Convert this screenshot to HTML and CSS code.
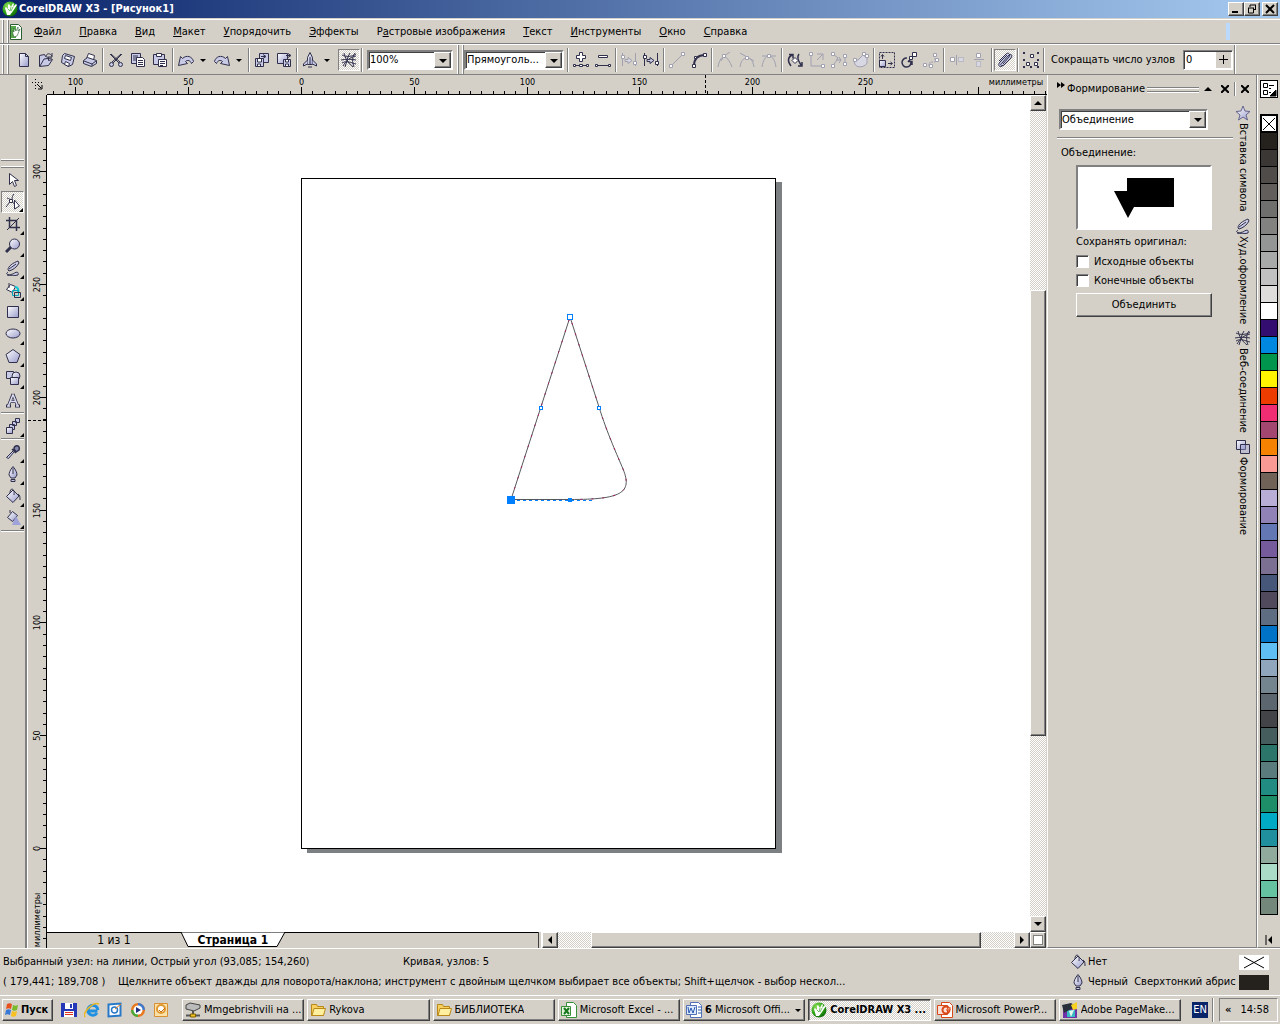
FILE: index.html
```html
<!DOCTYPE html>
<html lang="ru">
<head>
  <meta charset="UTF-8" />
  <meta name="viewport" content="width=device-width, initial-scale=1.0"/>
  <title>CorelDRAW X3 - [Рисунок1]</title>
  <link rel="stylesheet" href="styles.css">
</head>
<body>
  <!-- icon sprite -->
  <svg class="sprite" aria-hidden="true">
    <defs>
      <linearGradient id="shade" x1="0" y1="0" x2="1" y2="1">
        <stop offset="0" stop-color="#ffffff"/>
        <stop offset="1" stop-color="#9a9ccb"/>
      </linearGradient>
      <radialGradient id="ball" cx="0.35" cy="0.3" r="0.8">
        <stop offset="0" stop-color="#8fe05a"/>
        <stop offset="0.6" stop-color="#28a012"/>
        <stop offset="1" stop-color="#0b5a08"/>
      </radialGradient>
    </defs>
    <symbol id="i-corel" viewBox="0 0 16 16"><circle cx="8" cy="8" r="7.500" fill="url(#ball)" stroke="none"/><path d="M5 14L3 7l1-1 2 2V4l1-1 2 3 2-4 1 1-1 3 3-3 1 1-4 6-3 4z" fill="#fff" stroke="none"/><path d="M6 8l2 2M9 6l-1 4M11 6l-2 4" stroke="#3aa82a" fill="none" stroke-width=".7"/></symbol>
    <symbol id="i-doc" viewBox="0 0 16 16"><path d="M2.500.5h8l3 3v12h-11z" fill="#fff" stroke="#2a6030"/><path d="M3 2h5v12H3z" fill="#54a848" stroke="none"/><path d="M6 13L4 7l2 1V4l2 3 2-4v4l2-2-3 7z" fill="#fff" stroke="#2a6030" stroke-width=".6"/></symbol>
    <symbol id="i-new" viewBox="0 0 16 16"><path d="M3.500 1.500h6l3 3v10h-9z" fill="url(#shade)"/><path d="M9.500 1.500v3h3" fill="none"/></symbol>
    <symbol id="i-open" viewBox="0 0 16 16"><path d="M1.500 14.500v-11l5-1 1 2 3 1v3l4-1-4 6z"/><path d="M2 14l4-7 8-1" fill="none"/><path d="M8 4c1-3 4-3 6 0M14 1v4h-4" fill="none"/></symbol>
    <symbol id="i-save" viewBox="0 0 16 16"><path d="M4.500 1.500l10 3-2 8-4 2-7-4 1-7z"/><path d="M5.500 3.500l6 2-1 3-6-2zM5.500 9.500l4 2-1 3-4-2z" fill="#fff"/></symbol>
    <symbol id="i-print" viewBox="0 0 16 16"><path d="M4.500 6.500l2-5 6 2-1 5z" fill="#fff"/><path d="M1.500 8.500l4-3 9 3v3l-5 3-8-3z"/><path d="M2 9l8 3 4-3M10 12v2" fill="none"/></symbol>
    <symbol id="i-cut" viewBox="0 0 16 16"><path d="M2 2l9 9M14 2L5 11M3 2l9 8M13 2L4 10" fill="none"/><circle cx="3.500" cy="12.500" r="2"/><circle cx="12.500" cy="12.500" r="2"/></symbol>
    <symbol id="i-copy" viewBox="0 0 16 16"><path d="M1.500 1.500h9v10h-9z"/><path d="M3 4h5M3 6h5M3 8h3" /><path d="M6.500 5.500h6l2 2v7h-8z" fill="#fff"/><path d="M8 8.500h5M8 10.500h5M8 12.500h5"/></symbol>
    <symbol id="i-paste" viewBox="0 0 16 16"><path d="M1.500 2.500h11v10h-11z"/><path d="M4.500 1.500h5v3h-5z" fill="#fff"/><path d="M6.500 7.500h8v7h-8z" fill="#fff"/><path d="M8 9.500h5M8 11.500h5M8 13.500h3"/></symbol>
    <symbol id="i-undo" viewBox="0 0 16 16"><path d="M.5 13.500l2-9 2 2c4-4 10-2 11 3l-2 2c-1-3-4-4-6-2l2 2z"/></symbol>
    <symbol id="i-redo" viewBox="0 0 16 16"><path d="M15.500 13.500l-2-9-2 2c-4-4-10-2-11 3l2 2c1-3 4-4 6-2l-2 2z"/></symbol>
    <symbol id="i-import" viewBox="0 0 16 16"><path d="M5.500 1.500h9v9h-9z"/><path d="M7 4.500h4M9 2.500l3 2-3 2" fill="none"/><path d="M1.500 6.500h8v8h-8z"/><path d="M3.500 7v3h4V7M3.500 14v-2h3v2" fill="#fff"/></symbol>
    <symbol id="i-export" viewBox="0 0 16 16"><path d="M1.500 1.500h10v10h-10z" fill="url(#shade)"/><path d="M10 3.500h4M12 1.500l3 2-3 2" fill="none"/><path d="M7.500 7.500h7v7h-7z"/><path d="M9.500 8v2h3V8M9.500 14v-2h3v2" fill="#fff"/></symbol>
    <symbol id="i-launch" viewBox="0 0 16 16"><path d="M5.500 12.500v-7l2.500-5 2.500 5v7z" fill="url(#shade)"/><path d="M5.500 8l-4 4v2l4-2M10.500 8l4 4v2l-4-2M6 15h4M8 5v8"/></symbol>
    <symbol id="i-web" viewBox="0 0 16 16"><path d="M1 3c4 2 10 2 14-1M0 8c5-1 10-1 15 0M2 14C5 9 9 5 15 4M3 1c1 5 4 10 9 14M9 1c-3 4-3 9-5 14M14 1c-3 4-3 9-1 14M1 11c5-3 9 0 14 1" fill="none"/></symbol>
    <symbol id="i-addnode" viewBox="0 0 16 16"><path d="M6.500 3.500v-3h3v3h3v3h-3v3h-3v-3h-3v-3z" fill="#fff"/><path d="M3 13.500h10" /><path d="M.5 12.500h2v2h-2zM6.500 12.500h3v2h-3zM13.500 12.500h2v2h-2z" fill="#fff"/></symbol>
    <symbol id="i-delnode" viewBox="0 0 16 16"><path d="M3.500 3.500h9v2h-9z" fill="#fff"/><path d="M3 13.500h10"/><path d="M.5 12.500h2v2h-2zM13.500 12.500h2v2h-2z" fill="#fff"/></symbol>
    <symbol id="i-join" viewBox="0 0 16 16"><path d="M1.500 1v13M14.500 1v13M4 7.500h3v-2l4 3-4 3v-2H4z"/><path d="M.5 3.500h3v3h-3zM12.500 9.500h3v3h-3z" fill="#fff"/></symbol>
    <symbol id="i-line" viewBox="0 0 16 16"><path d="M2 14L14 2"/><path d="M.5 12.500h3v3h-3zM12.500.5h3v3h-3z" fill="#fff"/></symbol>
    <symbol id="i-curve" viewBox="0 0 16 16"><path d="M3 14C3 7 6 3 14 3" fill="none" stroke-width="2"/><path d="M1.500 12.500h3v3h-3zM12.500 1.500h3v3h-3zM3.500 4.500h2v2h-2z" fill="#fff"/></symbol>
    <symbol id="i-cusp" viewBox="0 0 16 16"><path d="M1 15C2 9 4 6 7 4c4 2 6 6 8 11M7 4l6-4M7 4L4 9" fill="none"/><path d="M5.500 2.500h3v3h-3z" fill="#fff"/></symbol>
    <symbol id="i-smooth" viewBox="0 0 16 16"><path d="M1 15C2 9 4 6 8 6c4 0 6 3 7 9M1 1l14 8" fill="none"/><path d="M6.500 4.500h3v3h-3z" fill="#fff"/></symbol>
    <symbol id="i-symm" viewBox="0 0 16 16"><path d="M1 15C2 9 4 4 8 4c4 0 6 5 7 11M1 4h14" fill="none"/><path d="M6.500 2.500h3v3h-3z" fill="#fff"/></symbol>
    <symbol id="i-reverse" viewBox="0 0 16 16"><path d="M4 14C0 9 1 5 5 3M2 2.500h4v4M12 2c-3 4 0 8 2 11M15 10v4h-4" fill="none" stroke-width="1.500"/><path d="M8 5.500l3 3-3 3-3-3z" fill="#fff"/></symbol>
    <symbol id="i-close" viewBox="0 0 16 16"><path d="M2 2v12h12M8 2h6v6M14 2L8 8" fill="none"/><path d="M.5.5h3v3h-3zM12.500 12.500h3v3h-3z" fill="#fff"/></symbol>
    <symbol id="i-extract" viewBox="0 0 16 16"><path d="M2 2l5 4-5 8M14 3v10M5 8h5l-2-3M10 8l-2 3" fill="none"/><path d="M.5.5h3v3h-3zM.5 12.500h3v3h-3zM12.500 2.500h3v3h-3zM12.500 10.500h3v3h-3z" fill="#fff"/></symbol>
    <symbol id="i-auto" viewBox="0 0 16 16"><path d="M2 8c-3 8 9 9 12 3V6l-4-3-5 5z"/><path d="M.5 6.500h3v3h-3zM9.500.5h3v3h-3zM12.500 2.500h3v3h-3z" fill="#fff"/></symbol>
    <symbol id="i-stretch" viewBox="0 0 16 16"><path d="M.5.5h15v15H.5z" fill="none" stroke-dasharray="2 1"/><path d="M.5 8.500h6v6h-6z" fill="url(#shade)"/><path d="M3.500 7V3M2 4.500l1.500-2 1.500 2M9 11.500h4M11.500 10l2 1.500-2 1.500" fill="none"/></symbol>
    <symbol id="i-rotate" viewBox="0 0 16 16"><path d="M6 6a4.500 4.500 0 1 0 4 4M12 4l-5 6M7 9.500h4V13" fill="none" stroke-width="1.500"/><path d="M11.500.5h4v4h-4zM8.500 4.500h3v3h-3z" fill="#fff"/></symbol>
    <symbol id="i-align" viewBox="0 0 16 16"><path d="M2 13h5v-3h5V4" fill="none" stroke-dasharray="2 1"/><path d="M.5 11.500h3v3h-3zM6.500 12.500h3v3h-3zM10.500 1.500h3v3h-3zM12.500 6.500h3v3h-3z" fill="#fff"/></symbol>
    <symbol id="i-href" viewBox="0 0 16 16"><path d="M1.500 5.500h4v4h-4z" fill="#fff"/><path d="M7.500 3v10"/><path d="M9.500 5.500h5v4h-5z" stroke-dasharray="1 1"/></symbol>
    <symbol id="i-vref" viewBox="0 0 16 16"><path d="M5.500 1.500h4v4h-4z" fill="#fff"/><path d="M3 7.500h10"/><path d="M5.500 9.500h4v5h-4z" stroke-dasharray="1 1"/></symbol>
    <symbol id="i-elastic" viewBox="0 0 16 16"><path d="M2 9l7-7c2-2 5 0 3 3l-6 7M6 13c-3 4-6 0-3-3l7-7M5 11l6-7c3-3 5-1 3 2l-7 7c-2 2-5 0-2-2z"/></symbol>
    <symbol id="i-selall" viewBox="0 0 16 16"><path d="M0 1h2M14 1h2M0 15h2M7 15h2M14 15h2M0 8h2M14 8h2" stroke-width="2"/><path d="M7.500 2.500h3v3h-3zM3.500 10.500h3v3h-3zM11.500 10.500h3v3h-3z" fill="#fff"/></symbol>
    <symbol id="i-pick" viewBox="0 0 16 16"><path d="M4.500 1.500v11l3-3 2 5 2-1-2-5h4z" fill="#fff"/></symbol>
    <symbol id="i-shape" viewBox="0 0 16 16"><path d="M9 0C6 3 8 6 6 7S3 11 1 13M2 4c4 1 6 4 9 9" fill="none"/><path d="M4.500 5.500h3v3h-3z" fill="#fff"/><path d="M9.500 6v9l5-3z" fill="#fff"/></symbol>
    <symbol id="i-crop" viewBox="0 0 16 16"><path d="M4.500 1v10.500H15M1 4.500h10.500V15" fill="none" stroke-width="1.500"/><path d="M2 14L14 2"/></symbol>
    <symbol id="i-zoom" viewBox="0 0 16 16"><path d="M1 14l5-5" stroke-width="3"/><circle cx="9.500" cy="6" r="5" fill="url(#shade)"/></symbol>
    <symbol id="i-pen" viewBox="0 0 16 16"><path d="M3 10C3 6 8 3 13 1l1 2c-2 4-6 7-10 8z" fill="url(#shade)"/><path d="M4 9l7-5"/><path d="M3 12c-4 3 2 3 5 2 4-3 6-2 5 1-4 1-8 1-11 0" /></symbol>
    <symbol id="i-smart" viewBox="0 0 16 16"><path d="M1.500 7.500l4-5 5 2-3 6z" fill="#fff"/><path d="M4 1v5" /><path d="M10 5c3 0 4 3 3 6" stroke="#00c8d8" stroke-width="2" fill="none"/><path d="M7.500 8.500h6v5h-6z" stroke="#00a8b8" fill="none"/><path d="M9.500 10.500h6v5h-6z" fill="none"/></symbol>
    <symbol id="i-rect" viewBox="0 0 16 16"><path d="M2.500 2.500h11v11h-11z" fill="url(#shade)"/></symbol>
    <symbol id="i-ellipse" viewBox="0 0 16 16"><ellipse cx="8" cy="7.500" rx="7" ry="4.500" fill="url(#shade)"/></symbol>
    <symbol id="i-poly" viewBox="0 0 16 16"><path d="M8 1.500l7 5-3 8H4l-3-8z" fill="url(#shade)"/></symbol>
    <symbol id="i-shapes" viewBox="0 0 16 16"><path d="M1.500 1.500h7v7h-7z"/><circle cx="11" cy="6" r="4" fill="url(#shade)"/><path d="M5.500 7.500h8v7h-8z" fill="url(#shade)"/></symbol>
    <symbol id="i-text" viewBox="0 0 16 16"><path d="M8 2l4.500 11.500M8 2L3.500 13.500M5 9.500h6M1 14h5M10 14h5" fill="none" stroke-width="3"/><path d="M8 2.500l4.500 11M8 2.500l-4.500 11M5 9.500h6M2 14h3M11 14h3" fill="none" stroke="#dcdcf0" stroke-width="1.500"/></symbol>
    <symbol id="i-blend" viewBox="0 0 16 16"><path d="M10.500.5h4v4h-4zM7.500 3.500h4v4h-4zM4.500 6.500h5v5h-5z"/><path d="M1.500 9.500h6v6h-6z" fill="url(#shade)"/></symbol>
    <symbol id="i-dropper" viewBox="0 0 16 16"><path d="M1.500 13.500l7-7 1 1-6 7z"/><path d="M7 5l4 4M9 5c0-5 7-4 5 1l-3 2z" fill="#8688ae" stroke-width="1.500"/></symbol>
    <symbol id="i-nib" viewBox="0 0 16 16"><path d="M8 .5C5 4 4 7 4 9l2 3h4l2-3c0-2-1-5-4-8.500z" fill="url(#shade)"/><path d="M8 2v6"/><path d="M6 13.500h4v2H6z"/></symbol>
    <symbol id="i-bucket" viewBox="0 0 16 16"><path d="M1.500 8.500L8 2l6 6-6 6.500z" fill="url(#shade)"/><path d="M5 5c0-6 5-5 4 2M13 6c2 1 2 3 2 6" fill="none"/></symbol>
    <symbol id="i-ifill" viewBox="0 0 16 16"><path d="M2.500 7.500l5-6 5 4-5 6z" fill="url(#shade)"/><path d="M5 3V0" /><path d="M11 6l5 9H7z" fill="#9fa2d8" stroke="none"/></symbol>
    <symbol id="i-star" viewBox="0 0 16 16"><path d="M8 1l2 5 5 .5-4 3.500 1.500 5L8 12l-4.500 3L5 10 1 6.500 6 6z" fill="url(#shade)" stroke="#64648c"/></symbol>
    <symbol id="i-squares" viewBox="0 0 16 16"><path d="M1.500 1.500h9v9h-9z" fill="url(#shade)"/><path d="M5.500 5.500h9v9h-9z" fill="#9fa2d866"/></symbol>
    <symbol id="i-flag" viewBox="0 0 16 16"><g stroke="none"><path d="M3 2c2-1 3-1 5 0L7 7C5 6 4 6 2 7z" fill="#e8501c"/><path d="M9 3c2 1 3 1 5 0l-1 5c-2 1-4 1-5 0z" fill="#7ab928"/><path d="M2 8c2-1 3-1 5 0l-1 5C4 12 3 12 1 13z" fill="#3a78d8"/><path d="M8 9c2 1 3 1 5 0l-1 5c-2 1-4 1-5 0z" fill="#f8c020"/></g></symbol>
    <symbol id="i-floppy" viewBox="0 0 16 16"><g stroke="none"><path d="M0 1h16v14H0z" fill="#2438b8"/><path d="M4 1h8v6H4zM3 9h10v6H3z" fill="#fff"/><path d="M9 2h2v4H9z" fill="#2438b8"/><path d="M4 10h8v1H4zM4 12h8v1H4z" fill="#e03020"/></g></symbol>
    <symbol id="i-ie" viewBox="0 0 16 16"><path d="M13.500 9H5M13 11a5 5 0 1 1 .8-3" fill="none" stroke="#2090e0" stroke-width="3"/><path d="M1 15C-2 11 9-1 15 2" fill="none" stroke="#f0b820" stroke-width="1.500"/></symbol>
    <symbol id="i-outx" viewBox="0 0 16 16"><path d="M1.500 2.500l12-1v12l-12 1z" fill="#fff" stroke="#2878c8" stroke-width="2"/><circle cx="7.500" cy="8" r="3" fill="none" stroke="#2878c8" stroke-width="1.500"/><path d="M8 7l6-5" stroke="#e08020"/></symbol>
    <symbol id="i-wmp" viewBox="0 0 16 16"><circle cx="8" cy="8" r="7" fill="#e87820" stroke="none"/><path d="M8 1a7 7 0 0 1 7 7H8z" fill="#3c78d0" stroke="none"/><path d="M8 15a7 7 0 0 1-7-7h7z" fill="#48a838" stroke="none"/><circle cx="8" cy="8" r="4.500" fill="#fff" stroke="none"/><path d="M6 5l5 3-5 3z" fill="#203080" stroke="none"/></symbol>
    <symbol id="i-outlook" viewBox="0 0 16 16"><path d="M1.500 1.500h13v13h-13z" fill="#fbe0a8" stroke="#d89030"/><circle cx="8" cy="7" r="4" fill="#fff" stroke="#e09830" stroke-width="2"/><path d="M6 8l2 2 4-4" fill="none" stroke="#c07010"/></symbol>
    <symbol id="i-netdrive" viewBox="0 0 16 16"><path d="M1 3l4-2 10 2v3l-6 3-8-2z" fill="#bbb" stroke="#444"/><path d="M8 9v4M1 13.500h14" stroke="#555" stroke-width="2"/><path d="M5.500 12h5v3h-5z" fill="#f0c020" stroke="#806000"/></symbol>
    <symbol id="i-folder" viewBox="0 0 16 16"><path d="M1.500 13.500v-11h5l1 2h6v9z" fill="#f8d060" stroke="#b88818"/><path d="M2 13.500l2-7h11.500l-2 7z" fill="#fff0a0" stroke="#b88818"/></symbol>
    <symbol id="i-excel" viewBox="0 0 16 16"><path d="M5.500.5h7l3 3v12h-10z" fill="#fff" stroke="#389038"/><path d="M.5 4.500h9v9h-9z" fill="#e4f4e0" stroke="#389038"/><path d="M3 6l5 6M8 6l-5 6" stroke="#18781c" stroke-width="2"/></symbol>
    <symbol id="i-word" viewBox="0 0 16 16"><path d="M4.500.5h8l3 3v12h-11z" fill="#fff" stroke="#5070b8"/><path d="M.5 3.500h10v9H.5z" fill="#dce8fc" stroke="#5070b8"/><path d="M2 5l1 6 2-5 2 5 2-6M12 5h3M12 8h3M12 11h3" fill="none" stroke="#2858b0"/></symbol>
    <symbol id="i-ppt" viewBox="0 0 16 16"><path d="M4.500.5h8l3 3v12h-11z" fill="#fff" stroke="#d84818"/><path d="M.5 3.500h10v9H.5z" fill="#fbe0d8" stroke="#d84818"/><circle cx="9" cy="8" r="3.500" fill="none" stroke="#d84818" stroke-width="2"/><path d="M9 8h4V5" fill="#f8b090" stroke="#d84818"/></symbol>
    <symbol id="i-pm" viewBox="0 0 16 16"><g stroke="none"><path d="M1 4h14v12H1z" fill="#7030a8"/><path d="M5 8h8v7H5z" fill="#38b8c0"/><path d="M0 3l9-2 6 4-6 2-7 4z" fill="#28303c"/><path d="M9 3l6-3v7l-4 1z" fill="#f8d020"/><path d="M7 9l5-1-3 7z" fill="#e8f8f0"/></g></symbol>
  </svg>

  <header class="titlebar">
    <svg class="icon"><use href="#i-corel"/></svg>
    <h1>CorelDRAW X3 - [Рисунок1]</h1>
    <div class="window-btns">
      <button aria-label="Свернуть"><svg viewBox="0 0 10 10"><path d="M1 8h6" stroke-width="2"/></svg></button>
      <button aria-label="Восстановить"><svg viewBox="0 0 10 10"><path d="M3 1h6M3 1v2M8.500 1v5M7 5.500h2M1 4h6M1.500 4v5h5V4"/></svg></button>
      <button class="close" aria-label="Закрыть"><svg viewBox="0 0 10 10"><path d="M1 1l8 8M9 1L1 9" stroke-width="2"/></svg></button>
    </div>
  </header>

  <nav class="menubar">
    <span class="grip"></span>
    <svg class="icon"><use href="#i-doc"/></svg>
    <button><u>Ф</u>айл</button>
    <button><u>П</u>равка</button>
    <button><u>В</u>ид</button>
    <button><u>М</u>акет</button>
    <button><u>У</u>порядочить</button>
    <button><u>Э</u>ффекты</button>
    <button>Р<u>а</u>стровые изображения</button>
    <button><u>Т</u>екст</button>
    <button><u>И</u>нструменты</button>
    <button><u>О</u>кно</button>
    <button><u>С</u>правка</button>
    <span class="marker"></span>
  </nav>

  <div class="toolbars">
    <span class="grip"></span>
    <button class="tool" aria-label="Создать"><svg class="icon"><use href="#i-new"/></svg></button>
    <button class="tool" aria-label="Открыть"><svg class="icon"><use href="#i-open"/></svg></button>
    <button class="tool" aria-label="Сохранить"><svg class="icon"><use href="#i-save"/></svg></button>
    <button class="tool" aria-label="Печать"><svg class="icon"><use href="#i-print"/></svg></button>
    <span class="sep"></span>
    <button class="tool" aria-label="Вырезать"><svg class="icon"><use href="#i-cut"/></svg></button>
    <button class="tool" aria-label="Копировать"><svg class="icon"><use href="#i-copy"/></svg></button>
    <button class="tool" aria-label="Вставить"><svg class="icon"><use href="#i-paste"/></svg></button>
    <span class="sep"></span>
    <button class="tool drop" aria-label="Отменить"><svg class="icon"><use href="#i-undo"/></svg></button>
    <button class="tool drop" aria-label="Вернуть"><svg class="icon"><use href="#i-redo"/></svg></button>
    <span class="sep"></span>
    <button class="tool" aria-label="Импорт"><svg class="icon"><use href="#i-import"/></svg></button>
    <button class="tool" aria-label="Экспорт"><svg class="icon"><use href="#i-export"/></svg></button>
    <span class="sep"></span>
    <button class="tool drop" aria-label="Запуск приложений"><svg class="icon"><use href="#i-launch"/></svg></button>
    <button class="tool pressed" aria-label="Веб-соединение"><svg class="icon"><use href="#i-web"/></svg></button>
    <span class="sep"></span>
    <div class="combo zoom"><select aria-label="Масштаб"><option>100%</option></select></div>

    <span class="grip"></span>
    <div class="combo mode"><select aria-label="Режим выделения"><option>Прямоуголь...</option></select></div>
    <span class="sep"></span>
    <button class="tool" aria-label="Добавить узлы"><svg class="icon"><use href="#i-addnode"/></svg></button>
    <button class="tool" aria-label="Удалить узлы"><svg class="icon"><use href="#i-delnode"/></svg></button>
    <span class="sep"></span>
    <button class="tool" disabled aria-label="Соединить узлы"><svg class="icon"><use href="#i-join"/></svg></button>
    <button class="tool" aria-label="Разъединить"><svg class="icon"><use href="#i-join"/></svg></button>
    <span class="sep"></span>
    <button class="tool" disabled aria-label="В линию"><svg class="icon"><use href="#i-line"/></svg></button>
    <button class="tool" aria-label="В кривую"><svg class="icon"><use href="#i-curve"/></svg></button>
    <span class="sep"></span>
    <button class="tool" disabled aria-label="Острый"><svg class="icon"><use href="#i-cusp"/></svg></button>
    <button class="tool" disabled aria-label="Сглаженный"><svg class="icon"><use href="#i-smooth"/></svg></button>
    <button class="tool" disabled aria-label="Симметричный"><svg class="icon"><use href="#i-symm"/></svg></button>
    <span class="sep"></span>
    <button class="tool" aria-label="Обратить"><svg class="icon"><use href="#i-reverse"/></svg></button>
    <button class="tool" disabled aria-label="Замкнуть"><svg class="icon"><use href="#i-close"/></svg></button>
    <button class="tool" disabled aria-label="Извлечь"><svg class="icon"><use href="#i-extract"/></svg></button>
    <button class="tool" disabled aria-label="Автозамыкание"><svg class="icon"><use href="#i-auto"/></svg></button>
    <span class="sep"></span>
    <button class="tool" aria-label="Растянуть"><svg class="icon"><use href="#i-stretch"/></svg></button>
    <button class="tool" aria-label="Повернуть"><svg class="icon"><use href="#i-rotate"/></svg></button>
    <button class="tool" disabled aria-label="Выровнять"><svg class="icon"><use href="#i-align"/></svg></button>
    <span class="sep"></span>
    <button class="tool" disabled aria-label="Отразить по горизонтали"><svg class="icon"><use href="#i-href"/></svg></button>
    <button class="tool" disabled aria-label="Отразить по вертикали"><svg class="icon"><use href="#i-vref"/></svg></button>
    <span class="sep"></span>
    <button class="tool pressed" aria-label="Эластичный режим"><svg class="icon"><use href="#i-elastic"/></svg></button>
    <span class="sep"></span>
    <button class="tool" aria-label="Выделить все узлы"><svg class="icon"><use href="#i-selall"/></svg></button>
    <span class="sep"></span>
    <label class="reduce" for="reduce">Сокращать число узлов</label>
    <div class="spin">
      <input id="reduce" type="text" value="0">
      <button aria-label="Изменить значение"><svg viewBox="0 0 9 9"><path d="M0 4.500h9M4.500 0v9"/></svg></button>
    </div>
    <span class="sep last"></span>
  </div>

  <main class="main">
    <aside class="toolbox">
      <span class="grip-h"></span>
      <button class="tool" aria-label="Указатель"><svg class="icon"><use href="#i-pick"/></svg></button>
      <button class="tool fly pressed" aria-label="Форма"><svg class="icon"><use href="#i-shape"/></svg></button>
      <button class="tool fly" aria-label="Обрезка"><svg class="icon"><use href="#i-crop"/></svg></button>
      <button class="tool fly" aria-label="Масштаб"><svg class="icon"><use href="#i-zoom"/></svg></button>
      <button class="tool fly" aria-label="Кривая"><svg class="icon"><use href="#i-pen"/></svg></button>
      <button class="tool fly" aria-label="Интеллектуальная заливка"><svg class="icon"><use href="#i-smart"/></svg></button>
      <button class="tool fly" aria-label="Прямоугольник"><svg class="icon"><use href="#i-rect"/></svg></button>
      <button class="tool fly" aria-label="Эллипс"><svg class="icon"><use href="#i-ellipse"/></svg></button>
      <button class="tool fly" aria-label="Многоугольник"><svg class="icon"><use href="#i-poly"/></svg></button>
      <button class="tool fly" aria-label="Основные фигуры"><svg class="icon"><use href="#i-shapes"/></svg></button>
      <button class="tool" aria-label="Текст"><svg class="icon"><use href="#i-text"/></svg></button>
      <span class="sep-h"></span>
      <button class="tool fly" aria-label="Перетекание"><svg class="icon"><use href="#i-blend"/></svg></button>
      <span class="sep-h"></span>
      <button class="tool fly" aria-label="Пипетка"><svg class="icon"><use href="#i-dropper"/></svg></button>
      <button class="tool fly" aria-label="Абрис"><svg class="icon"><use href="#i-nib"/></svg></button>
      <button class="tool fly" aria-label="Заливка"><svg class="icon"><use href="#i-bucket"/></svg></button>
      <button class="tool fly" aria-label="Интерактивная заливка"><svg class="icon"><use href="#i-ifill"/></svg></button>
      <span class="sep-h end"></span>
    </aside>

    <section class="workspace">
      <div class="ruler-corner"><svg viewBox="0 0 12 12"><path d="M0 3.500h12M3.500 0v12" stroke-dasharray="1 2"/><path d="M5 5l4 4M10 6v4H6"/></svg></div>
      <svg class="ruler" id="rulerH"></svg>
      <svg class="ruler" id="rulerV"></svg>

      <svg class="canvas" aria-label="Рисунок1">
        <rect x="260" y="87" width="475" height="671" fill="#7c8083"/>
        <rect x="254.500" y="83.500" width="474" height="670" fill="#fff" stroke="#000"/>
        <path class="curve" d="M464 404.500L523 222L552 312C560 338 571 362 576 374C586 398 574 404.500 523 404.500Z"/>
        <path class="curve-edge" d="M464 404.500L523 222L552 312C560 338 571 362 576 374C586 398 574 404.500 523 404.500"/>
        <path class="baseline" d="M464 405.500h84"/>
        <g class="nodes">
          <rect x="520.500" y="219.500" width="5" height="5"/>
          <rect x="492.500" y="311.500" width="3" height="3"/>
          <rect x="550.500" y="311.500" width="3" height="3"/>
          <rect x="521.500" y="403.500" width="3" height="3" fill="#0080ff"/>
          <rect x="460.500" y="401.500" width="7" height="7" fill="#0080ff"/>
        </g>
      </svg>

      <div class="scroll vertical">
        <button aria-label="Вверх"><svg viewBox="0 0 8 8"><path d="M0 6l4-4 4 4z"/></svg></button>
        <span class="before"></span><span class="thumb"></span><span class="after"></span>
        <button aria-label="Вниз"><svg viewBox="0 0 8 8"><path d="M0 2l4 4 4-4z"/></svg></button>
      </div>

      <div class="pagebar">
        <div class="pages">
          <span class="count">1 из 1</span>
          <button class="page-tab">
            <svg viewBox="0 0 104 15" preserveAspectRatio="none"><path d="M0 0l7 14.500h89L104 0z"/></svg>
            <span>Страница 1</span>
          </button>
        </div>
        <span class="splitter"></span>
        <div class="scroll horizontal">
          <button aria-label="Влево"><svg viewBox="0 0 8 8"><path d="M6 0L2 4l4 4z"/></svg></button>
          <span class="before"></span><span class="thumb"></span><span class="after"></span>
          <button aria-label="Вправо"><svg viewBox="0 0 8 8"><path d="M2 0l4 4-4 4z"/></svg></button>
        </div>
        <button class="navigator" aria-label="Навигатор"></button>
      </div>
    </section>

    <aside class="docker">
      <div class="docker-head">
        <svg class="chev" viewBox="0 0 8 6"><path d="M0 0l4 3-4 3zM4 0l4 3-4 3z"/></svg>
        <h2>Формирование</h2>
        <span class="lines"></span>
        <button aria-label="Свернуть окно"><svg viewBox="0 0 8 8"><path d="M0 6l4-4 4 4z"/></svg></button>
        <button class="x" aria-label="Закрыть окно"><svg viewBox="0 0 8 8"><path d="M0 0l8 8M8 0L0 8"/></svg></button>
        <span class="sep"></span>
        <button class="x" aria-label="Закрыть группу"><svg viewBox="0 0 8 8"><path d="M0 0l8 8M8 0L0 8"/></svg></button>
      </div>
      <div class="docker-body">
        <form class="shaping">
          <div class="combo"><select aria-label="Операция"><option>Объединение</option></select></div>
          <hr>
          <p class="caption">Объединение:</p>
          <div class="inner">
            <div class="preview"><svg viewBox="0 0 60 40"><path d="M13 0h47v29H20l-6 11L0 13h13z"/></svg></div>
            <p>Сохранять оригинал:</p>
            <label><input type="checkbox"> Исходные объекты</label>
            <label><input type="checkbox"> Конечные объекты</label>
            <button type="button">Объединить</button>
          </div>
        </form>
        <div class="tabs">
          <button><svg class="icon"><use href="#i-star"/></svg><span>Вставка символа</span></button>
          <button><svg class="icon"><use href="#i-pen"/></svg><span>Худ.оформление</span></button>
          <button><svg class="icon"><use href="#i-web"/></svg><span>Веб-соединение</span></button>
          <button><svg class="icon"><use href="#i-squares"/></svg><span>Формирование</span></button>
        </div>
      </div>
    </aside>

    <aside class="palette">
      <button class="options" aria-label="Параметры палитры"><svg viewBox="0 0 16 16"><path d="M2.500 2.500h4v4h-4zM2.500 9.500h4v4h-4zM8 4.500h5M8 7.500h2M8 11.500h2"/><path d="M15 9v6H9z" fill="#000"/></svg></button>
      <div class="swatches" id="swatches">
        <button class="none" aria-label="Нет цвета"><svg viewBox="0 0 14 14"><path d="M1 1l12 12M13 1L1 13"/></svg></button>
      </div>
      <button class="first" aria-label="К началу"><svg viewBox="0 0 8 10"><path d="M1 0v10" stroke="#000"/><path d="M7 1v8L3 5z"/></svg></button>
    </aside>
  </main>

  <footer class="status">
    <div class="status-text">
      <p><span class="node-info">Выбранный узел: на линии, Острый угол (93,085; 154,260)</span><span>Кривая, узлов: 5</span></p>
      <p><span class="coords">( 179,441; 189,708 )</span><span>Щелкните объект дважды для поворота/наклона; инструмент с двойным щелчком выбирает все объекты; Shift+щелчок - выбор нескол...</span></p>
    </div>
    <div class="status-color">
      <p><svg class="icon"><use href="#i-bucket"/></svg><span>Нет</span><svg class="chip" viewBox="0 0 30 15"><path d="M5 2l20 11M25 2L5 13" stroke="#000"/></svg></p>
      <p><svg class="icon"><use href="#i-nib"/></svg><span>Черный&nbsp; Сверхтонкий абрис</span><span class="chip black"></span></p>
    </div>
  </footer>

  <div class="taskbar">
    <button class="start"><svg class="icon"><use href="#i-flag"/></svg>Пуск</button>
    <div class="quick">
      <button aria-label="Сохранить"><svg class="icon"><use href="#i-floppy"/></svg></button>
      <button aria-label="Internet Explorer"><svg class="icon"><use href="#i-ie"/></svg></button>
      <button aria-label="Outlook Express"><svg class="icon"><use href="#i-outx"/></svg></button>
      <button aria-label="Windows Media"><svg class="icon"><use href="#i-wmp"/></svg></button>
      <button aria-label="Outlook"><svg class="icon"><use href="#i-outlook"/></svg></button>
    </div>
    <div class="tasks">
      <button><svg class="icon"><use href="#i-netdrive"/></svg><span>Mmgebrishvili на ...</span></button>
      <button><svg class="icon"><use href="#i-folder"/></svg><span>Rykova</span></button>
      <button><svg class="icon"><use href="#i-folder"/></svg><span>БИБЛИОТЕКА</span></button>
      <button><svg class="icon"><use href="#i-excel"/></svg><span>Microsoft Excel - ...</span></button>
      <button class="group"><svg class="icon"><use href="#i-word"/></svg><span><b>6</b> Microsoft Offi...</span></button>
      <button class="active"><svg class="icon"><use href="#i-corel"/></svg><span>CorelDRAW X3 ...</span></button>
      <button><svg class="icon"><use href="#i-ppt"/></svg><span>Microsoft PowerP...</span></button>
      <button><svg class="icon"><use href="#i-pm"/></svg><span>Adobe PageMake...</span></button>
    </div>
    <span class="lang">EN</span>
    <span class="sep"></span>
    <div class="tray"><b>«</b><time>14:58</time></div>
  </div>

  <script src="script.js"></script>
</body>
</html>
```
FILE: styles.css
```css
:root {
  --face: #d4d0c8;
  --shadow: #808080;
  --dark: #404040;
  --ink: #30304c;
  --navy: #0a246a;
  --dither: repeating-conic-gradient(#ffffff 0 25%, #d4d0c8 0 50%) 0 0 / 2px 2px;
  --font: "DejaVu Sans Condensed", "DejaVu Sans", sans-serif;
}

* {
  box-sizing: border-box;
}

body {
  margin: 0;
  height: 100vh;
  display: flex;
  flex-direction: column;
  overflow: hidden;
  background: var(--face);
  color: #000;
  font-family: var(--font);
  font-size: 11px;
  line-height: 14px;
}

h1, h2, p {
  margin: 0;
  font-size: 11px;
  font-weight: normal;
}

button, input, select {
  margin: 0;
  padding: 0;
  border: 0;
  border-radius: 0;
  background: none;
  color: inherit;
  font: inherit;
}

.sprite {
  position: absolute;
  width: 0;
  height: 0;
}

.icon {
  flex: none;
  display: block;
  width: 16px;
  height: 16px;
  fill: #c9cbe6;
  stroke: var(--ink);
}

/* title */
.titlebar {
  flex: none;
  display: flex;
  align-items: center;
  height: 18px;
  padding: 0 2px;
  background: linear-gradient(to right, var(--navy), #a6caf0);
  color: #fff;
}

.titlebar h1 {
  flex: 1;
  margin-left: 1px;
  font-weight: bold;
}

.window-btns {
  display: flex;
}

.window-btns button,
.scroll button,
.thumb,
.navigator,
.start,
.tasks button,
.combo::after {
  background: var(--face);
  border: 1px solid;
  border-color: #fff var(--dark) var(--dark) #fff;
  box-shadow: inset -1px -1px var(--shadow);
}

.window-btns button {
  width: 16px;
  height: 14px;
  display: grid;
  place-items: center;
}

.window-btns .close {
  margin-left: 2px;
}

.window-btns svg {
  width: 10px;
  height: 10px;
  fill: none;
  stroke: #000;
}

/* menu */
.menubar {
  flex: none;
  display: flex;
  align-items: center;
  height: 25px;
  margin-top: 1px;
  padding: 0 50px 0 2px;
  border-top: 1px solid #fff;
  border-bottom: 1px solid var(--shadow);
}

.menubar button {
  padding: 0 9px;
  white-space: nowrap;
}

.menubar .icon {
  margin-right: 1px;
}

.marker {
  width: 4px;
  height: 17px;
  margin-left: auto;
  background: #bcd8fa;
}

.grip {
  flex: none;
  align-self: stretch;
  width: 6px;
  border: solid #fff;
  border-width: 0 1px;
  box-shadow: 1px 0 var(--shadow), inset 1px 0 var(--shadow);
}

/* toolbars */
.toolbars {
  flex: none;
  display: flex;
  align-items: center;
  height: 31px;
  padding: 0 2px;
  border-top: 1px solid #fff;
  border-bottom: 1px solid var(--shadow);
}

.toolbars .grip + .tool {
  margin-left: 5px;
}

.tool {
  flex: none;
  position: relative;
  display: grid;
  place-items: center;
  width: 22px;
  height: 22px;
}

.tool:disabled .icon {
  fill: #d8d8e4;
  stroke: #a0a0b0;
}

.tool.pressed {
  background: var(--dither);
  border: 1px solid;
  border-color: var(--shadow) #fff #fff var(--shadow);
}

.tool.drop {
  width: 36px;
  justify-content: start;
  padding-left: 3px;
}

.tool.drop::after {
  content: "";
  position: absolute;
  right: 5px;
  top: 10px;
  border: 3px solid transparent;
  border-top-color: #000;
}

.tool.drop + .pressed {
  margin-left: 3px;
}

.sep {
  flex: none;
  width: 2px;
  height: 24px;
  margin: 0 1px;
  border-left: 1px solid var(--shadow);
  border-right: 1px solid #fff;
}

.combo {
  flex: none;
  position: relative;
  height: 20px;
}

.combo.zoom {
  width: 86px;
  margin: 0 4px 0 3px;
}

.combo.mode {
  width: 100px;
  margin: 0 2px 0 1px;
}

.combo select {
  appearance: none;
  width: 100%;
  height: 100%;
  padding: 0 17px 0 1px;
  background: #fff;
  border: 2px solid;
  border-color: var(--shadow) #fff #fff var(--shadow);
  box-shadow: inset 1px 1px var(--dark);
}

.combo::after {
  content: "";
  position: absolute;
  top: 2px;
  right: 2px;
  bottom: 2px;
  width: 15px;
  pointer-events: none;
}

.combo::before {
  content: "";
  position: absolute;
  z-index: 1;
  right: 6px;
  top: 9px;
  border: 4px solid transparent;
  border-top-color: #000;
  border-bottom: 0;
  pointer-events: none;
}

.reduce {
  margin-left: 5px;
  width: 132px;
  white-space: nowrap;
}

.spin {
  display: flex;
  width: 50px;
  height: 20px;
  background: #fff;
  border: 1px solid;
  border-color: var(--shadow) #fff #fff var(--shadow);
  box-shadow: inset 1px 1px var(--dark);
}

.spin input {
  flex: 1;
  min-width: 0;
  padding-left: 2px;
  outline: 0;
}

.spin button {
  width: 15px;
  margin: 1px;
  background: var(--face);
  display: grid;
  place-items: center;
}

.spin svg {
  width: 9px;
  height: 9px;
  stroke: #000;
}

.sep.last {
  align-self: stretch;
  height: auto;
}

/* toolbox */
.main {
  flex: 1;
  min-height: 0;
  display: flex;
}

.toolbox {
  flex: none;
  display: flex;
  flex-direction: column;
  width: 27px;
  padding: 84px 1px 0 1px;
  border-right: 2px solid var(--shadow);
}

.toolbox .tool {
  width: 23px;
}

.tool.fly::after {
  content: "";
  position: absolute;
  right: 0;
  bottom: 0;
  border: 2px solid #000;
  border-top-color: transparent;
  border-left-color: transparent;
}

.grip-h {
  height: 8px;
  margin-bottom: 2px;
  border: solid #fff;
  border-width: 1px 0;
  box-shadow: 0 1px var(--shadow), inset 0 1px var(--shadow);
}

.sep-h {
  height: 2px;
  margin: 1px 0;
  border-top: 1px solid var(--shadow);
  border-bottom: 1px solid #fff;
}

/* drawing area */
.workspace {
  flex: 1;
  min-width: 0;
  display: grid;
  grid-template: 20px minmax(0, 1fr) 16px / 19px minmax(0, 1fr) 17px;
  border-left: 1px solid #fff;
}

.ruler-corner {
  display: grid;
  place-items: center;
}

.ruler-corner svg {
  width: 12px;
  height: 12px;
  fill: none;
  stroke: #000;
}

.ruler {
  display: block;
  width: 100%;
  height: 100%;
  font-size: 9px;
  stroke: #000;
  shape-rendering: crispEdges;
}

.ruler text {
  stroke: none;
  text-anchor: middle;
}

#rulerH {
  grid-column: 2 / 4;
  border-bottom: 1px solid #000;
}

#rulerV {
  grid-row: 2 / 4;
  grid-column: 1;
  border-right: 1px solid #000;
}

.canvas {
  width: 100%;
  height: 100%;
  background: #fff;
}

.canvas > rect {
  shape-rendering: crispEdges;
}

.curve {
  fill: none;
  stroke: #55585c;
}

.curve-edge {
  fill: none;
  stroke: #a02060;
  stroke-dasharray: 2 9;
}

.baseline {
  stroke: #0080ff;
  stroke-dasharray: 3 3;
}

.nodes {
  fill: #fff;
  stroke: #0080ff;
  shape-rendering: crispEdges;
}

.scroll {
  display: flex;
  background: var(--dither);
}

.scroll.vertical {
  flex-direction: column;
  width: 16px;
}

.scroll.horizontal {
  flex: 490;
}

.scroll button,
.navigator {
  flex: none;
  display: grid;
  place-items: center;
  width: 16px;
  height: 16px;
}

.scroll svg {
  width: 8px;
  height: 8px;
}

.vertical .before { flex: 179; }
.vertical .thumb { flex: 446; }
.vertical .after { flex: 180; }
.horizontal .before { flex: 33; }
.horizontal .thumb { flex: 389; }
.horizontal .after { flex: 33; }

.pagebar {
  grid-column: 2 / 4;
  display: flex;
  padding-right: 1px;
}

.pages {
  flex: 494;
  display: flex;
  border-top: 1px solid #000;
  font-size: 12px;
}

.count {
  width: 134px;
  text-align: center;
}

.page-tab {
  position: relative;
  width: 104px;
  height: 15px;
  margin-top: -1px;
  font-weight: bold;
  line-height: 12px;
}

.page-tab svg {
  position: absolute;
  inset: 0;
  width: 104px;
  height: 15px;
  fill: #fff;
  stroke: #000;
}

.page-tab span {
  position: relative;
}

.splitter {
  width: 4px;
  border-left: 1px solid var(--dark);
  border-right: 1px solid #fff;
}

.navigator::before {
  content: "";
  width: 8px;
  height: 8px;
  background: #fff;
  border: 1px solid var(--shadow);
}

/* docker */
.docker {
  flex: none;
  display: flex;
  flex-direction: column;
  width: 210px;
  padding: 6px 3px 0 9px;
  border: solid;
  border-width: 0 1px 1px;
  border-color: #fff var(--shadow) var(--shadow) #fff;
}

.docker-head {
  display: flex;
  align-items: center;
  height: 16px;
}

.docker-head svg {
  width: 8px;
  height: 8px;
}

.docker-head .chev {
  height: 6px;
  margin-bottom: 8px;
}

.docker-head h2 {
  margin: 0 2px;
}

.docker-head .lines {
  flex: 1;
  height: 5px;
  border: solid var(--shadow);
  border-width: 1px 0;
  box-shadow: inset 0 1px #fff, 0 1px #fff;
}

.docker-head button {
  display: grid;
  place-items: center;
  width: 18px;
}

.docker-head .x {
  width: 16px;
  stroke: #000;
  stroke-width: 2;
}

.docker-head .sep {
  height: 14px;
}

.docker-body {
  display: flex;
  flex: 1;
}

.shaping {
  flex: 1;
  padding-top: 12px;
}

.shaping .combo {
  width: 149px;
  height: 21px;
  margin-left: 2px;
}

.shaping hr {
  height: 2px;
  margin: 7px 0;
  border: solid;
  border-width: 1px 0;
  border-color: var(--shadow) #fff #fff;
}

.caption {
  margin-left: 4px;
}

.inner {
  display: flex;
  flex-direction: column;
  width: 136px;
  margin: 5px 0 0 19px;
}

.preview {
  display: grid;
  place-items: center;
  height: 65px;
  margin-bottom: 5px;
  background: #fff;
  border: 2px solid;
  border-color: var(--shadow) #fff #fff var(--shadow);
}

.preview svg {
  width: 60px;
  height: 40px;
}

.inner label {
  display: flex;
  align-items: center;
  gap: 5px;
  height: 19px;
  white-space: nowrap;
}

.inner p {
  margin-bottom: 3px;
}

.inner input {
  appearance: none;
  width: 13px;
  height: 13px;
  background: #fff;
  border: 1px solid;
  border-color: var(--shadow) #fff #fff var(--shadow);
  box-shadow: inset 1px 1px var(--dark);
}

.inner button {
  height: 24px;
  margin-top: 3px;
  border: 1px solid;
  border-color: #fff var(--dark) var(--dark) #fff;
  box-shadow: inset -1px -1px var(--shadow);
}

.tabs {
  width: 20px;
  padding-top: 8px;
}

.tabs button {
  display: flex;
  flex-direction: column;
  align-items: center;
  width: 20px;
  gap: 2px;
  margin-bottom: 6px;
}

.tabs span {
  writing-mode: vertical-rl;
  white-space: nowrap;
}

/* palette */
.palette {
  flex: none;
  display: flex;
  flex-direction: column;
  align-items: center;
  width: 23px;
  padding-top: 5px;
  border-left: 1px solid #fff;
  border-bottom: 1px solid var(--shadow);
}

.palette .options {
  width: 18px;
  height: 18px;
  margin-bottom: 16px;
  background: #fff;
  border: 1px solid #000;
}

.options svg {
  display: block;
  width: 16px;
  height: 16px;
  fill: none;
  stroke: #000;
}

.swatches {
  display: flex;
  flex-direction: column;
  width: 18px;
  border: 1px solid #000;
  border-top: 0;
}

.swatches button {
  height: 17px;
  border-top: 1px solid #000;
}

.swatches .none {
  height: 18px;
  background: #fff;
  border: 2px solid #000;
  border-width: 2px 1px 1px;
}

.none svg {
  display: block;
  width: 14px;
  height: 14px;
  stroke: #000;
}

.palette .first {
  margin-top: auto;
  padding-bottom: 2px;
}

.first svg {
  display: block;
  width: 8px;
  height: 10px;
}

/* status bar */
.status {
  flex: none;
  display: flex;
  justify-content: space-between;
  height: 47px;
  padding: 3px 11px 0 3px;
  border-top: 1px solid #fff;
  white-space: nowrap;
}

.status p {
  display: flex;
  align-items: center;
  height: 20px;
}

.node-info {
  width: 400px;
}

.coords {
  width: 115px;
}

.status-color {
  width: 199px;
}

.status-color .icon {
  margin-right: 2px;
}

.chip {
  width: 30px;
  height: 15px;
  margin-left: auto;
  background: #fff;
}

.chip.black {
  background: #25221e;
}

/* taskbar */
.taskbar {
  flex: none;
  display: flex;
  align-items: center;
  height: 29px;
  padding: 0 2px;
  border-top: 1px solid #fff;
  white-space: nowrap;
}

.start {
  display: flex;
  align-items: center;
  gap: 1px;
  width: 51px;
  height: 22px;
  padding: 0 1px;
  font-weight: bold;
}

.quick {
  display: flex;
  gap: 7px;
  margin: 0 13px 0 8px;
}

.tasks {
  flex: 1;
  min-width: 0;
  display: flex;
  gap: 3px;
}

.tasks button {
  flex: 1;
  min-width: 0;
  position: relative;
  display: flex;
  align-items: center;
  gap: 3px;
  height: 22px;
  padding: 0 0 0 2px;
}

.tasks span {
  overflow: hidden;
}

.tasks .active {
  background: var(--dither);
  border-color: var(--dark) #fff #fff var(--dark);
  box-shadow: inset 1px 1px var(--shadow);
  font-weight: bold;
}

.tasks .group::after {
  content: "";
  position: absolute;
  right: 3px;
  top: 9px;
  border: 3px solid transparent;
  border-top-color: #000;
}

.lang {
  margin: 0 3px 0 11px;
  width: 16px;
  line-height: 16px;
  text-align: center;
  background: var(--navy);
  color: #fff;
}

.tray {
  display: flex;
  align-items: center;
  justify-content: space-between;
  width: 59px;
  height: 24px;
  margin-left: 4px;
  padding: 0 8px 0 5px;
  border: 1px solid;
  border-color: var(--shadow) #fff #fff var(--shadow);
}
```
FILE: script.js
```javascript
const SVG_NS = 'http://www.w3.org/2000/svg';
const PX_PER_MM = 2.256;
const ORIGIN = { x: 254, y: 753 };
const CURSOR = { x: 658, y: 325 };

const COLORS = [
  '#25221e', '#3b3734', '#504c49', '#615e5c', '#6f6f6e', '#828281', '#949595', '#a8a9a9',
  '#c1c1c1', '#dedddc', '#ffffff', '#330e70', '#0088e0', '#00954c', '#fff500', '#ec3c00',
  '#f02c73', '#a44770', '#f58200', '#fa9a95', '#716258', '#b9aed6', '#9082b6', '#6277b4',
  '#755a9c', '#7b7092', '#46577a', '#504a5c', '#5f6d83', '#0073c6', '#5fbff4', '#8fa6bc',
  '#74858f', '#5b666e', '#424448', '#455d5d', '#2b756b', '#5a7c7c', '#218d82', '#1e8e68',
  '#00aac5', '#208f9e', '#90aa9b', '#aadcc8', '#65c3a2', '#73877a'
];

function add(parent, tag, attrs, text) {
  const el = document.createElementNS(SVG_NS, tag);
  Object.entries(attrs).forEach(([key, value]) => el.setAttribute(key, value));
  if (text !== undefined) el.textContent = text;
  parent.appendChild(el);
}

function drawRulerH() {
  const ruler = document.getElementById('rulerH');
  const width = ruler.getBoundingClientRect().width;
  ruler.replaceChildren();
  for (let mm = -110; ; mm += 5) {
    const x = Math.round(ORIGIN.x + mm * PX_PER_MM) + 0.5;
    if (x > width) break;
    const major = mm % 50 === 0;
    add(ruler, 'path', { d: `M${x} ${major ? 12 : 16}V19` });
    if (major && x < width - 80) add(ruler, 'text', { x, y: 10 }, Math.abs(mm));
  }
  add(ruler, 'text', { x: width - 31, y: 10 }, 'миллиметры');
  add(ruler, 'path', { d: `M${CURSOR.x + 0.5} 0V19`, 'stroke-dasharray': '3 2' });
}

function drawRulerV() {
  const ruler = document.getElementById('rulerV');
  const height = ruler.getBoundingClientRect().height;
  ruler.replaceChildren();
  for (let mm = 330; ; mm -= 5) {
    const y = Math.round(ORIGIN.y - mm * PX_PER_MM) + 0.5;
    if (y > height) break;
    const major = mm % 50 === 0;
    add(ruler, 'path', { d: `M${major ? 12 : 15} ${y}H18` });
    if (major) add(ruler, 'text', { x: 0, y: 0, transform: `translate(12 ${y}) rotate(-90)` }, mm);
  }
  add(ruler, 'text', { x: 0, y: 0, transform: `translate(12 ${height - 28}) rotate(-90)` }, 'миллиметры');
  add(ruler, 'path', { d: `M0 ${CURSOR.y + 0.5}H18`, 'stroke-dasharray': '3 2' });
}

function fillPalette() {
  const box = document.getElementById('swatches');
  COLORS.forEach(color => {
    const swatch = document.createElement('button');
    swatch.style.backgroundColor = color;
    swatch.setAttribute('aria-label', color);
    box.appendChild(swatch);
  });
}

function drawRulers() {
  drawRulerH();
  drawRulerV();
}

fillPalette();
drawRulers();
window.addEventListener('resize', drawRulers);
```
